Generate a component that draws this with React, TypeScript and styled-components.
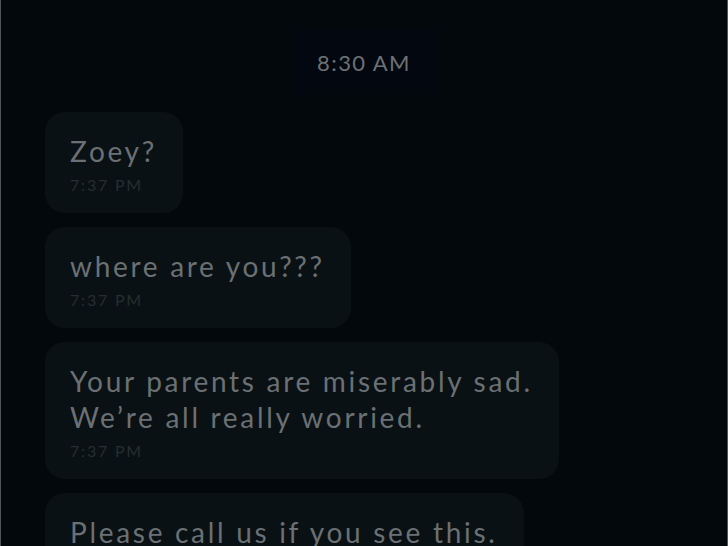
import React from 'react';
import styled, { createGlobalStyle } from 'styled-components';

const GlobalStyle = createGlobalStyle`
  html, body {
    margin: 0;
    padding: 0;
    background: #02080c;
  }
  * {
    box-sizing: border-box;
  }
`;

const Screen = styled.div`
  width: 728px;
  height: 546px;
  overflow: hidden;
  background: #02080c;
  border-left: 1px solid #4e5557;
  border-right: 1px solid #4e5557;
  font-family: Lato, 'Open Sans', sans-serif;
  display: flex;
  flex-direction: column;
`;

const DayHeader = styled.div`
  display: flex;
  justify-content: center;
  padding-top: 30px;
  margin-bottom: 17px;
`;

const DayLabel = styled.span`
  display: inline-block;
  padding: 22px 24px;
  background: #03070f;
  color: #6c7275;
  font-size: 22px;
  line-height: 21px;
  letter-spacing: 1.4px;
`;

const Thread = styled.div`
  display: flex;
  flex-direction: column;
  align-items: flex-start;
  gap: 14px;
  padding-left: 44px;
`;

const Bubble = styled.div`
  background: #0a1114;
  border-radius: 20px;
  padding: 21px 26px 18px 25px;
  max-width: 560px;
`;

const MessageText = styled.div`
  color: #6a7073;
  font-size: 28px;
  line-height: 36px;
  letter-spacing: 2.7px;
  white-space: pre-line;
`;

const Stamp = styled.div`
  color: #272d30;
  font-size: 16px;
  line-height: 20px;
  margin-top: 6px;
  letter-spacing: 1.8px;
`;

interface Message {
  id: number;
  text: string;
  time: string;
}

const messages: Message[] = [
  { id: 1, text: 'Zoey?', time: '7:37 PM' },
  { id: 2, text: 'where are you???', time: '7:37 PM' },
  { id: 3, text: 'Your parents are miserably sad.\nWe\u2019re all really worried.', time: '7:37 PM' },
  { id: 4, text: 'Please call us if you see this.', time: '7:38 PM' },
];

function App() {
  return (
    <>
      <GlobalStyle />
      <Screen>
        <DayHeader>
          <DayLabel>8:30 AM</DayLabel>
        </DayHeader>
        <Thread>
          {messages.map((m) => (
            <Bubble key={m.id}>
              <MessageText>{m.text}</MessageText>
              <Stamp>{m.time}</Stamp>
            </Bubble>
          ))}
        </Thread>
      </Screen>
    </>
  );
}

export default App;
